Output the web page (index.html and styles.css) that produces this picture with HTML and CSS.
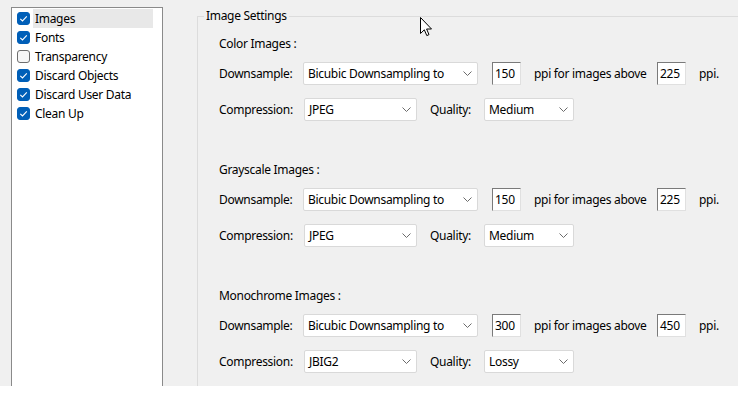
FILE: index.html
```html
<!DOCTYPE html>
<html>
<head>
<meta charset="utf-8">
<link rel="stylesheet" href="styles.css">
</head>
<body>
<div class="window">
  <div class="list">
    <div class="item"><span class="cb on"><svg viewBox="0 0 13 13" width="13" height="13"><path d="M3.3 6.8 L5.5 9 L9.8 4.4" fill="none" stroke="#fff" stroke-width="1.1"/></svg></span><span class="item-label selected">Images</span></div>
    <div class="item"><span class="cb on"><svg viewBox="0 0 13 13" width="13" height="13"><path d="M3.3 6.8 L5.5 9 L9.8 4.4" fill="none" stroke="#fff" stroke-width="1.1"/></svg></span><span class="item-label">Fonts</span></div>
    <div class="item"><span class="cb"></span><span class="item-label">Transparency</span></div>
    <div class="item"><span class="cb on"><svg viewBox="0 0 13 13" width="13" height="13"><path d="M3.3 6.8 L5.5 9 L9.8 4.4" fill="none" stroke="#fff" stroke-width="1.1"/></svg></span><span class="item-label">Discard Objects</span></div>
    <div class="item"><span class="cb on"><svg viewBox="0 0 13 13" width="13" height="13"><path d="M3.3 6.8 L5.5 9 L9.8 4.4" fill="none" stroke="#fff" stroke-width="1.1"/></svg></span><span class="item-label">Discard User Data</span></div>
    <div class="item"><span class="cb on"><svg viewBox="0 0 13 13" width="13" height="13"><path d="M3.3 6.8 L5.5 9 L9.8 4.4" fill="none" stroke="#fff" stroke-width="1.1"/></svg></span><span class="item-label">Clean Up</span></div>
  </div>

  <div class="group">
    <div class="group-title">Image Settings</div>
    <div class="group-body">

      <div class="section">
        <div class="section-title">Color Images :</div>
        <div class="row">
          <span class="lbl">Downsample:</span>
          <div class="select w-ds">Bicubic Downsampling to<svg class="chev" viewBox="0 0 9 5" width="9" height="5"><path d="M0.5 0.5 L4.5 4.5 L8.5 0.5" fill="none" stroke="#6b6b6b"/></svg></div>
          <div class="num">150</div>
          <span class="ppi-text">ppi for images above</span>
          <div class="num num-b">225</div>
          <span class="ppi-end">ppi.</span>
        </div>
        <div class="row row-2">
          <span class="lbl lbl-c">Compression:</span>
          <div class="select w-comp">JPEG<svg class="chev" viewBox="0 0 9 5" width="9" height="5"><path d="M0.5 0.5 L4.5 4.5 L8.5 0.5" fill="none" stroke="#6b6b6b"/></svg></div>
          <span class="q-lbl">Quality:</span>
          <div class="select w-q">Medium<svg class="chev" viewBox="0 0 9 5" width="9" height="5"><path d="M0.5 0.5 L4.5 4.5 L8.5 0.5" fill="none" stroke="#6b6b6b"/></svg></div>
        </div>
      </div>

      <div class="section">
        <div class="section-title">Grayscale Images :</div>
        <div class="row">
          <span class="lbl">Downsample:</span>
          <div class="select w-ds">Bicubic Downsampling to<svg class="chev" viewBox="0 0 9 5" width="9" height="5"><path d="M0.5 0.5 L4.5 4.5 L8.5 0.5" fill="none" stroke="#6b6b6b"/></svg></div>
          <div class="num">150</div>
          <span class="ppi-text">ppi for images above</span>
          <div class="num num-b">225</div>
          <span class="ppi-end">ppi.</span>
        </div>
        <div class="row row-2">
          <span class="lbl lbl-c">Compression:</span>
          <div class="select w-comp">JPEG<svg class="chev" viewBox="0 0 9 5" width="9" height="5"><path d="M0.5 0.5 L4.5 4.5 L8.5 0.5" fill="none" stroke="#6b6b6b"/></svg></div>
          <span class="q-lbl">Quality:</span>
          <div class="select w-q">Medium<svg class="chev" viewBox="0 0 9 5" width="9" height="5"><path d="M0.5 0.5 L4.5 4.5 L8.5 0.5" fill="none" stroke="#6b6b6b"/></svg></div>
        </div>
      </div>

      <div class="section">
        <div class="section-title">Monochrome Images :</div>
        <div class="row">
          <span class="lbl">Downsample:</span>
          <div class="select w-ds">Bicubic Downsampling to<svg class="chev" viewBox="0 0 9 5" width="9" height="5"><path d="M0.5 0.5 L4.5 4.5 L8.5 0.5" fill="none" stroke="#6b6b6b"/></svg></div>
          <div class="num">300</div>
          <span class="ppi-text">ppi for images above</span>
          <div class="num num-b">450</div>
          <span class="ppi-end">ppi.</span>
        </div>
        <div class="row row-2">
          <span class="lbl lbl-c">Compression:</span>
          <div class="select w-comp">JBIG2<svg class="chev" viewBox="0 0 9 5" width="9" height="5"><path d="M0.5 0.5 L4.5 4.5 L8.5 0.5" fill="none" stroke="#6b6b6b"/></svg></div>
          <span class="q-lbl">Quality:</span>
          <div class="select w-q">Lossy<svg class="chev" viewBox="0 0 9 5" width="9" height="5"><path d="M0.5 0.5 L4.5 4.5 L8.5 0.5" fill="none" stroke="#6b6b6b"/></svg></div>
        </div>
      </div>

    </div>
  </div>

  <svg class="cursor" viewBox="0 0 13 20" width="13" height="20"><path d="M0.5 0.5 L0.5 16.5 L4.3 12.8 L6.8 18.6 L9 17.6 L6.6 12 L11.5 12 Z" fill="#fff" stroke="#000" stroke-linejoin="round"/></svg>
</div>
</body>
</html>
```

FILE: styles.css
```css
* { box-sizing: border-box; }
html, body { margin: 0; padding: 0; background: #fff; }
body {
  font-family: "Noto Sans", "Open Sans", sans-serif;
  font-size: 12px;
  letter-spacing: -0.3px;
  color: #000;
}
.window {
  position: relative;
  height: 386px;
  background: #f0f0f0;
  display: flex;
  padding: 7px 0 0 11px;
  overflow: hidden;
}
.list {
  width: 152px;
  flex: none;
  background: #fff;
  border: 1px solid #8a8a8a;
  border-bottom: none;
  padding-top: 1px;
}
.item {
  display: flex;
  align-items: center;
  height: 19px;
  padding-left: 5px;
}
.cb {
  width: 13px;
  height: 13px;
  flex: none;
  border-radius: 3px;
  border: 1px solid #6e6e6e;
  background: #f6f6f6;
  display: flex;
  align-items: center;
  justify-content: center;
}
.cb.on {
  background: #005fb8;
  border-color: #005fb8;
}
.cb svg { display: block; flex: none; margin: -1px; }
.item-label {
  margin-left: 3px;
  padding-left: 2px;
  line-height: 19px;
  white-space: nowrap;
}
.item-label.selected {
  flex: 1;
  margin-right: 9px;
  background: #e8e8e8;
}
.group {
  flex: 1;
  margin: 9px 0 0 34px;
  border-top: 1px solid #dcdcdc;
  border-left: 1px solid #dcdcdc;
}
.group-title {
  width: fit-content;
  margin: -9px 0 0 6px;
  padding: 0 2px;
  line-height: 16px;
  background: #f0f0f0;
}
.group-body {
  padding: 12px 0 0 21px;
}
.section {
  margin-bottom: 41px;
}
.section-title {
  line-height: 16px;
  margin-bottom: 10px;
}
.row {
  display: flex;
  align-items: center;
  height: 23px;
  white-space: nowrap;
}
.row-2 { margin-top: 13px; }
.lbl { width: 84px; flex: none; }
.lbl-c { width: 85px; }
.select {
  position: relative;
  height: 23px;
  flex: none;
  background: #fff;
  border: 1px solid #d9d9d9;
  border-radius: 2px;
  padding-left: 4px;
  line-height: 21px;
  display: flex;
  align-items: center;
}
.chev {
  margin-left: auto;
  margin-right: 5px;
  flex: none;
}
.w-ds { width: 175px; }
.w-comp { width: 113px; }
.w-q { width: 90px; }
.num {
  width: 29px;
  height: 23px;
  flex: none;
  margin-left: 14px;
  background: #fff;
  border: 1px solid;
  border-color: #7a7a7a #e0e0e0 #e0e0e0 #7a7a7a;
  padding-left: 2px;
  line-height: 21px;
}
.ppi-text { margin-left: 13px; width: 123px; flex: none; }
.num-b { margin-left: 0; }
.ppi-end { margin-left: 13px; }
.q-lbl { margin-left: 13px; width: 54px; flex: none; }
.cursor {
  position: absolute;
  left: 420px;
  top: 17px;
  pointer-events: none;
}
```
